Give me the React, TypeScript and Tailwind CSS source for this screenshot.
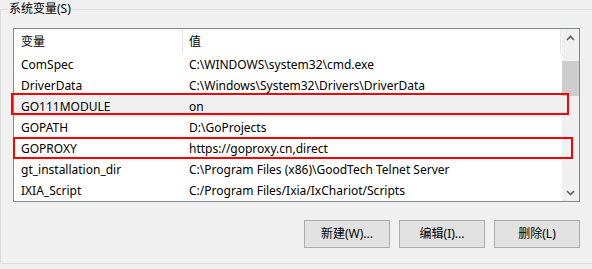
import React from "react"

const rows = [
  { name: "ComSpec", value: "C:\\WINDOWS\\system32\\cmd.exe" },
  { name: "DriverData", value: "C:\\Windows\\System32\\Drivers\\DriverData" },
  { name: "GO111MODULE", value: "on", hover: true },
  { name: "GOPATH", value: "D:\\GoProjects" },
  { name: "GOPROXY", value: "https://goproxy.cn,direct" },
  { name: "gt_installation_dir", value: "C:\\Program Files (x86)\\GoodTech Telnet Server" },
  { name: "IXIA_Script", value: "C:/Program Files/Ixia/IxChariot/Scripts" },
]

function Chevron({ down }: { down?: boolean }) {
  return (
    <svg width="9" height="6" viewBox="0 0 9 6">
      <polyline
        points={down ? "1,1 4.5,4.5 8,1" : "1,5 4.5,1.5 8,5"}
        fill="none"
        stroke="#606060"
        strokeWidth="1.6"
      />
    </svg>
  )
}

export default function App() {
  return (
    <div
      className="w-[592px] h-[269px] bg-[#f0f0f0] overflow-hidden text-[12px] text-black relative"
      style={{ fontFamily: '"Noto Sans", "Noto Sans CJK SC", sans-serif' }}
    >
      {/* 分组框 */}
      <div className="mt-[9px] w-[620px] h-[255px] border border-[#dcdcdc] relative">
        <div className="absolute left-[6px] top-[-9px] px-[2px] bg-[#f0f0f0] leading-[16px]">系统变量(S)</div>

        {/* 列表框 */}
        <div className="ml-[12px] mt-[18px] w-[567px] h-[174px] border border-[#828790] bg-white flex">
          <div className="w-[548px] flex flex-col">
            <div className="h-[25px] flex items-center">
              <div className="w-[169px] h-full pl-[7px] flex items-center border-r border-[#e5e5e5]">变量</div>
              <div className="w-[378px] h-full pl-[6px] flex items-center border-r border-[#e5e5e5]">值</div>
            </div>
            {rows.map((r) => (
              <div key={r.name} className={`h-[21px] flex items-center ${r.hover ? "bg-[#f0f0f0]" : ""}`}>
                <div className="w-[169px] pl-[7px] whitespace-nowrap">{r.name}</div>
                <div className="pl-[6px] whitespace-nowrap">{r.value}</div>
              </div>
            ))}
          </div>
          {/* 滚动条 */}
          <div className="w-[17px] h-full bg-[#f0f0f0] flex flex-col">
            <div className="h-[17px] flex items-center justify-center">
              <Chevron />
            </div>
            <div className="flex-1 pt-[15px]">
              <div className="h-[35px] bg-[#cdcdcd]" />
            </div>
            <div className="h-[17px] flex items-center justify-center">
              <Chevron down />
            </div>
          </div>
        </div>

        {/* 按钮 */}
        <div className="mt-[18px] ml-[303px] flex gap-[9px]">
          <button className="w-[86px] h-[28px] border border-[#adadad] bg-[#e1e1e1]">新建(W)...</button>
          <button className="w-[86px] h-[28px] border border-[#adadad] bg-[#e1e1e1]">编辑(I)...</button>
          <button className="w-[86px] h-[28px] border border-[#adadad] bg-[#e1e1e1]">删除(L)</button>
        </div>
      </div>

      {/* 红框标注 */}
      <div className="absolute left-[11px] top-[93px] w-[558px] h-[22px] border-2 border-[#ff0000]" />
      <div className="absolute left-[13px] top-[137px] w-[560px] h-[22px] border-2 border-[#ff0000]" />
    </div>
  )
}
